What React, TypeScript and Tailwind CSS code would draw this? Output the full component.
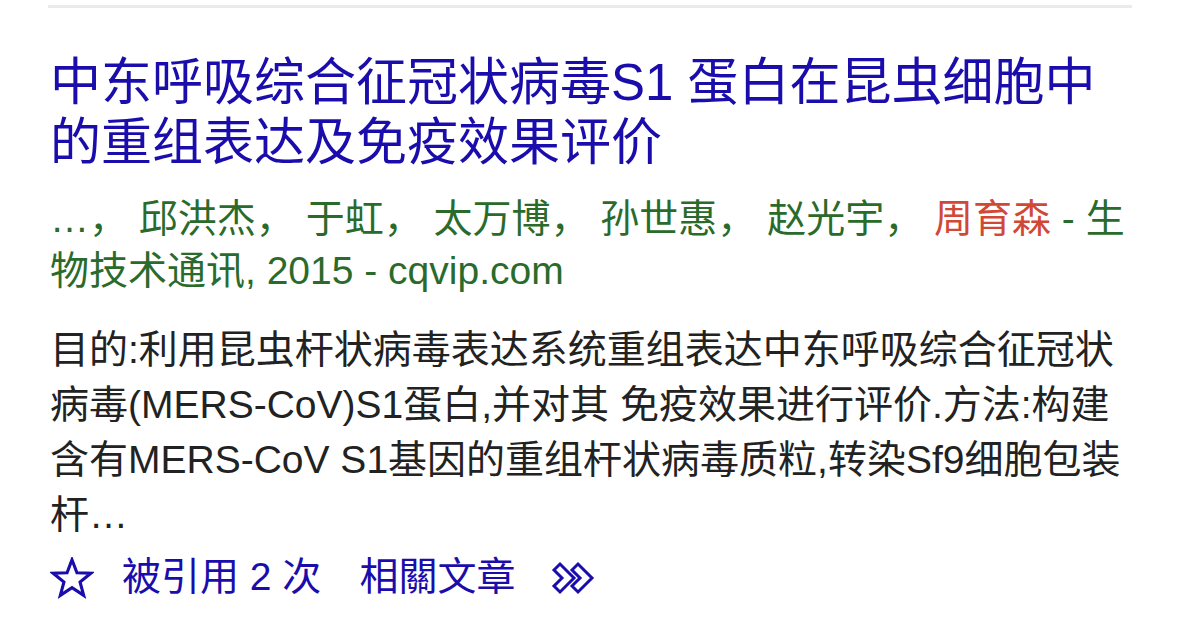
import React from "react";

const font = { fontFamily: '"Liberation Sans", "Noto Sans CJK SC", sans-serif' };

function StarIcon() {
  return (
    <svg width="44" height="42" viewBox="0 0 24 23" fill="none" stroke="#1a0dab" strokeWidth="1.7" strokeLinejoin="miter">
      <polygon points="12,1.5 14.7,8.6 22.3,8.9 16.4,13.7 18.4,21 12,16.8 5.6,21 7.6,13.7 1.7,8.9 9.3,8.6" />
    </svg>
  );
}

function MoreIcon() {
  return (
    <svg width="46" height="36" viewBox="0 0 46 36" fill="none" stroke="#1a0dab" strokeWidth="3" strokeLinejoin="miter">
      <polygon points="3,10 9,4 23,18 9,32 3,26 11,18" />
      <polygon points="21,10 27,4 41,18 27,32 21,26 29,18" />
    </svg>
  );
}

export default function App() {
  return (
    <div className="w-[1178px] h-[624px] bg-white overflow-hidden" style={font}>
      <div className="pt-[5px] pl-[48px] w-[1132px]">
        <div className="h-[3px] bg-[#ebebeb]" />
        <div className="pl-[2px] w-[1086px]">
          {/* title */}
          <h3 className="mt-[45px] text-[51px] leading-[60px] text-[#1a0dab]">
            中东呼吸综合征冠状病毒S1 蛋白在昆虫细胞中的重组表达及免疫效果评价
          </h3>

          {/* authors / source */}
          <div className="mt-[20px] text-[39px] leading-[52px] text-[#2a6b2c]">
            {"…， 邱洪杰， 于虹， 太万博， 孙世惠， 赵光宇， "}
            <span className="text-[#d14836]">周育森</span> - 生物技术通讯, 2015 - cqvip.com
          </div>

          {/* snippet */}
          <div className="mt-[25px] text-[39px] leading-[55px] text-[#222222]">
            目的:利用昆虫杆状病毒表达系统重组表达中东呼吸综合征冠状病毒(MERS-CoV)S1蛋白,并对其 免疫效果进行评价.方法:构建含有MERS-CoV S1基因的重组杆状病毒质粒,转染Sf9细胞包装杆…
          </div>

          {/* footer links */}
          <div className="mt-[8px] h-[55px] flex items-center text-[39px] text-[#1a0dab]">
            <StarIcon />
            <span className="ml-[28px]">被引用 2 次</span>
            <span className="ml-[38px]">相關文章</span>
            <span className="ml-[36px] flex items-center">
              <MoreIcon />
            </span>
          </div>
        </div>
      </div>
    </div>
  );
}
